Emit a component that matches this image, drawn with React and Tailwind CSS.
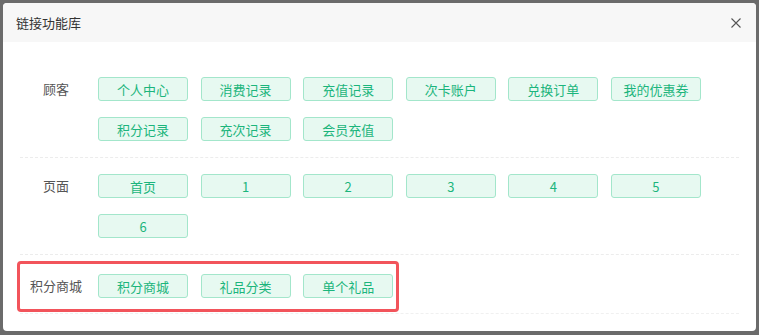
import React from 'react';

const font = { fontFamily: '"Noto Sans CJK SC", "Noto Sans", sans-serif' };

function LinkButton({ children }) {
  return (
    <button className="w-[90px] h-[24px] rounded-[3px] border border-[#a3e6cb] bg-[#e7f9f1] text-[13px] leading-none text-[#1bb57c]">
      {children}
    </button>
  );
}

function Section({ label, items }) {
  return (
    <div className="flex items-start pl-[14px]">
      <div className="w-[78px] h-[24px] flex items-center justify-center text-[13px] text-[#555]">{label}</div>
      <div className="ml-[3px] flex-1 flex flex-wrap gap-x-[12.6px] gap-y-[16px]">
        {items.map((t) => (
          <LinkButton key={t}>{t}</LinkButton>
        ))}
      </div>
    </div>
  );
}

export default function App() {
  return (
    <div className="w-[759px] h-[335px] bg-[#6b6b6b] overflow-hidden pt-[3px] pl-[3px]" style={font}>
      <div className="w-[753px] h-[328px] bg-white rounded-[4px] overflow-hidden flex flex-col">
        {/* Header */}
        <div className="h-[39px] bg-[#f7f7f7] flex items-center justify-between pl-[13px] pr-[14px] shrink-0">
          <span className="text-[13px] text-[#333]">链接功能库</span>
          <svg width="12" height="12" viewBox="0 0 12 12" className="text-[#555]">
            <path d="M1.5 1.5L10.5 10.5M10.5 1.5L1.5 10.5" stroke="currentColor" strokeWidth="1.1" fill="none" />
          </svg>
        </div>

        {/* Body */}
        <div className="pt-[35px]">
          <Section label="顾客" items={['个人中心', '消费记录', '充值记录', '次卡账户', '兑换订单', '我的优惠券', '积分记录', '充次记录', '会员充值']} />
          <div className="mx-[17px] mt-[16px] border-t border-dashed border-[#ececec]" />
          <div className="pt-[16px]">
            <Section label="页面" items={['首页', '1', '2', '3', '4', '5', '6']} />
          </div>
          <div className="mx-[17px] mt-[16px] border-t border-dashed border-[#ececec]" />

          {/* Highlighted section */}
          <div className="ml-[14px] mt-[6px] inline-flex items-start border-[3px] border-[#f2545b] rounded-[4px] pt-[10px] pb-[11px] pr-[3px]">
            <div className="w-[72px] h-[24px] flex items-center justify-center text-[13px] text-[#555]">积分商城</div>
            <div className="ml-[6px] flex gap-x-[12.6px]">
              <LinkButton>积分商城</LinkButton>
              <LinkButton>礼品分类</LinkButton>
              <LinkButton>单个礼品</LinkButton>
            </div>
          </div>
          <div className="mx-[17px] mt-[1px] border-t border-dashed border-[#f0f0f0]" />
        </div>
      </div>
    </div>
  );
}
